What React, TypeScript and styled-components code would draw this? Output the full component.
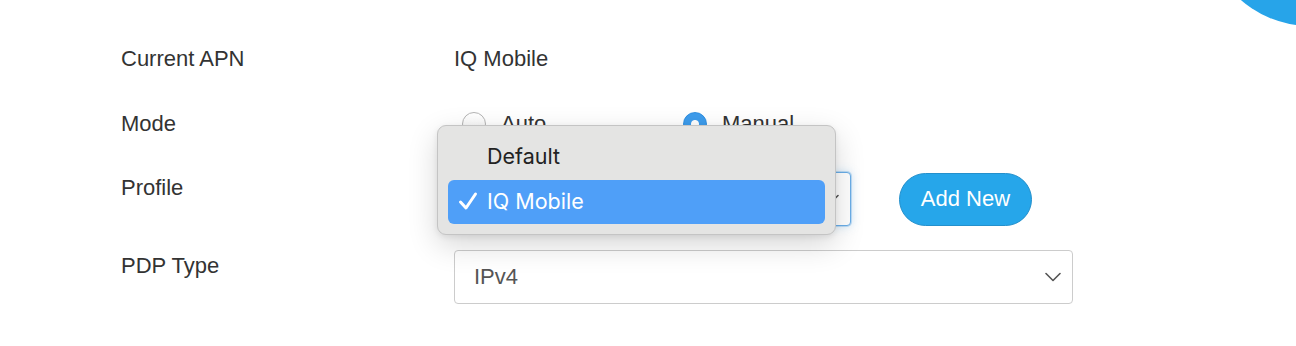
import React from "react";
import styled, { createGlobalStyle } from "styled-components";

const GlobalStyle = createGlobalStyle`
    html, body {
        margin: 0;
        padding: 0;
        background: #ffffff;
        font-family: "Liberation Sans", Arial, sans-serif;
        color: #333333;
    }
`

const Page = styled.div`
    position: relative;
    width: 1296px;
    height: 346px;
    overflow: hidden;
    box-sizing: border-box;
    padding: 45px 0 0 121px;
`

// floating help bubble peeking in from the top right corner
const CornerBubble = styled.div`
    position: absolute;
    left: 1205px;
    top: -184px;
    width: 210px;
    height: 210px;
    border-radius: 50%;
    background: #27a4e9;
`

const Form = styled.div`
    display: flex;
    flex-direction: column;
`

const Row = styled.div<{ $after: number; $labelOffset?: number }>`
    display: flex;
    align-items: ${p => (p.$labelOffset !== undefined ? "flex-start" : "center")};
    margin-bottom: ${p => p.$after}px;

    & > :first-child {
        margin-top: ${p => p.$labelOffset ?? 0}px;
    }
`

const Label = styled.div`
    width: 333px;
    flex-shrink: 0;
    font-size: 22px;
    line-height: 28px;
    color: #333333;
`

const Value = styled.div`
    font-size: 22px;
    line-height: 28px;
    color: #333333;
`

const RadioGroup = styled.div`
    display: flex;
    height: 28px;
    align-items: center;
`

const RadioOption = styled.label`
    display: flex;
    align-items: center;
    width: 221px;
    box-sizing: border-box;
    padding-left: 8px;
    gap: 15px;
    font-size: 22px;
    color: #333333;
`

const RadioDot = styled.span<{ $checked?: boolean }>`
    width: 24px;
    height: 24px;
    box-sizing: border-box;
    border-radius: 50%;
    border: ${p => (p.$checked ? "1px solid #2f8fe0" : "1px solid #b4b4b4")};
    background: ${p => (p.$checked ? "radial-gradient(circle, #ffffff 0 3.5px, #3d9cec 4.5px)" : "linear-gradient(#ffffff, #f3f3f3)")};
`

const ControlLine = styled.div`
    position: relative;
    display: flex;
    align-items: center;
    gap: 48px;
`

const Select = styled.div<{ $width: number; $focused?: boolean }>`
    width: ${p => p.$width}px;
    height: 54px;
    box-sizing: border-box;
    display: flex;
    align-items: center;
    justify-content: space-between;
    padding: 0 11px 0 19px;
    border-radius: 4px;
    border: 1px solid ${p => (p.$focused ? "#6aaee8" : "#cccccc")};
    box-shadow: ${p => (p.$focused ? "0 0 0 1px rgba(106, 174, 232, 0.35), 0 0 10px rgba(102, 175, 233, 0.35)" : "none")};
    background: #ffffff;
    font-size: 22px;
    color: #555555;
`

const Chevron = () => (
    <svg width="16" height="10" viewBox="0 0 16 10" fill="none">
        <path d="M1 1.5 L8 8.5 L15 1.5" stroke="#555555" strokeWidth="1.6" strokeLinecap="round" strokeLinejoin="round" />
    </svg>
)

const AddButton = styled.button`
    width: 133px;
    height: 53px;
    border-radius: 27px;
    border: 1px solid #2490cc;
    background: #26a6ea;
    color: #ffffff;
    font-family: "Liberation Sans", Arial, sans-serif;
    font-size: 22px;
    padding: 0;
`

const Popup = styled.div`
    position: absolute;
    left: -17px;
    top: -47px;
    width: 399px;
    box-sizing: border-box;
    padding: 9px 10px 10px;
    display: flex;
    flex-direction: column;
    gap: 1px;
    background: #e4e4e3;
    border: 1px solid #c4c4c4;
    border-radius: 9px;
    box-shadow: 0 10px 30px rgba(0, 0, 0, 0.16), 0 2px 6px rgba(0, 0, 0, 0.08);
    z-index: 2;
`

const PopupItem = styled.div<{ $active?: boolean }>`
    height: 44px;
    display: flex;
    align-items: center;
    border-radius: 6px;
    background: ${p => (p.$active ? "#4f9ff8" : "transparent")};
    color: ${p => (p.$active ? "#ffffff" : "#222222")};
    font-family: "Inter", "Noto Sans", sans-serif;
    font-size: 21.5px;
    padding-bottom: 2px;
    box-sizing: border-box;
`

const CheckSlot = styled.span`
    width: 39px;
    flex-shrink: 0;
    display: flex;
    justify-content: flex-start;
    padding-left: 10px;
    box-sizing: border-box;
`

const Check = () => (
    <svg width="20" height="20" viewBox="0 0 20 20" fill="none">
        <path d="M2.5 11 L8 17 L17.5 3" stroke="#ffffff" strokeWidth="3" strokeLinecap="round" strokeLinejoin="round" />
    </svg>
)

const profiles = ["Default", "IQ Mobile"];
const selectedProfile = "IQ Mobile";

const App = () => {
    return (
        <Page>
            <GlobalStyle />
            <CornerBubble />
            <Form>
                <Row $after={37}>
                    <Label>Current APN</Label>
                    <Value>IQ Mobile</Value>
                </Row>

                <Row $after={34}>
                    <Label>Mode</Label>
                    <RadioGroup>
                        <RadioOption>
                            <RadioDot />
                            Auto
                        </RadioOption>
                        <RadioOption>
                            <RadioDot $checked />
                            Manual
                        </RadioOption>
                    </RadioGroup>
                </Row>

                <Row $after={24} $labelOffset={2}>
                    <Label>Profile</Label>
                    <ControlLine>
                        <Select $width={397} $focused>
                            <span>IQ Mobile</span>
                            <Chevron />
                        </Select>
                        <AddButton>Add New</AddButton>
                        <Popup>
                            {profiles.map(name => (
                                <PopupItem key={name} $active={name === selectedProfile}>
                                    <CheckSlot>{name === selectedProfile && <Check />}</CheckSlot>
                                    {name}
                                </PopupItem>
                            ))}
                        </Popup>
                    </ControlLine>
                </Row>

                <Row $after={0} $labelOffset={2}>
                    <Label>PDP Type</Label>
                    <Select $width={619}>
                        <span>IPv4</span>
                        <Chevron />
                    </Select>
                </Row>
            </Form>
        </Page>
    );
}

export default App;
